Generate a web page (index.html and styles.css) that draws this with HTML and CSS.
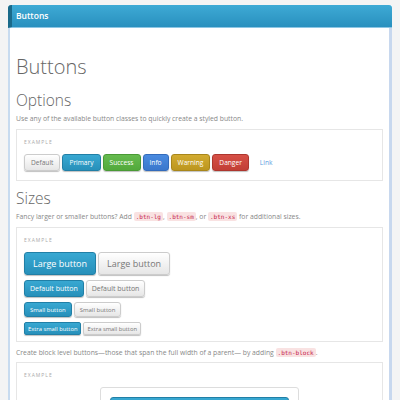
FILE: index.html
```html
<!DOCTYPE html>
<html>
<head>
<meta charset="utf-8">
<link rel="stylesheet" href="styles.css">
</head>
<body>
<div class="panel">
  <div class="panel-head">Buttons</div>
  <div class="panel-body">
    <h1 class="title">Buttons</h1>
    <h2 class="sub">Options</h2>
    <p class="txt">Use any of the available button classes to quickly create a styled button.</p>
    <div class="example">
      <div class="label">EXAMPLE</div>
      <div class="row">
        <span class="btn def">Default</span>
        <span class="btn pri">Primary</span>
        <span class="btn suc">Success</span>
        <span class="btn inf">Info</span>
        <span class="btn war">Warning</span>
        <span class="btn dan">Danger</span>
        <span class="btn lnk">Link</span>
      </div>
    </div>
    <h2 class="sub sizes">Sizes</h2>
    <p class="txt">Fancy larger or smaller buttons? Add <code>.btn-lg</code>, <code>.btn-sm</code>, or <code>.btn-xs</code> for additional sizes.</p>
    <div class="example sizes-ex">
      <div class="label">EXAMPLE</div>
      <div class="row"><span class="btn pri lg">Large button</span><span class="btn def lg">Large button</span></div>
      <div class="row"><span class="btn pri md">Default button</span><span class="btn def md">Default button</span></div>
      <div class="row"><span class="btn pri sm">Small button</span><span class="btn def sm">Small button</span></div>
      <div class="row"><span class="btn pri xs">Extra small button</span><span class="btn def xs">Extra small button</span></div>
    </div>
    <p class="txt block-txt">Create block level buttons—those that span the full width of a parent— by adding <code>.btn-block</code>.</p>
    <div class="example">
      <div class="label">EXAMPLE</div>
      <div class="well">
        <span class="btn pri block">Block level button</span>
      </div>
    </div>
  </div>
</div>
</body>
</html>
```

FILE: styles.css
```css
html, body {
  margin: 0;
  padding: 0;
  background: #f4f4f4;
  font-family: "Open Sans", "Noto Sans", sans-serif;
  color: #777;
  overflow: hidden;
}
.panel {
  margin: 5px 8px 0 8px;
  background: #fff;
}
.panel-head {
  height: 22px;
  line-height: 22px;
  background: linear-gradient(#3eaad5, #2990be);
  border-left: 4px solid #1a6a8a;
  border-bottom: 1px solid #8cc6e4;
  border-radius: 3px 3px 0 0;
  color: #fff;
  font-size: 8.5px;
  font-weight: 600;
  padding-left: 4px;
}
.panel-body {
  border-left: 2px solid #c8dbef;
  border-right: 3px solid #c8d8ee;
  padding: 27px 6px 20px 6px;
}
.title {
  margin: 0;
  font-size: 20px;
  font-weight: 300;
  line-height: 24px;
  color: #666;
}
.sub {
  margin: 12px 0 0 0;
  font-size: 15.5px;
  font-weight: 300;
  line-height: 18px;
  color: #666;
}
.sub.sizes { margin-top: 8px; }
.txt {
  margin: 4px 0 4px 0;
  font-size: 6.8px;
  line-height: 12px;
  color: #888;
}
.block-txt { margin: 5px 0 3px 0; }
code {
  font-family: "DejaVu Sans Mono", monospace;
  font-size: 6px;
  color: #c7254e;
  background: #f9e2e2;
  padding: 1px 2px;
  border-radius: 2px;
}
.example {
  border: 1px solid #e6e6e6;
  padding: 8px 7px 9px 7px;
}
.sizes-ex { padding-bottom: 6px; }
.label {
  font-size: 5px;
  letter-spacing: 1px;
  color: #aaa;
  line-height: 8px;
  margin-bottom: 8px;
}
.row {
  display: flex;
  align-items: center;
  gap: 2px;
  margin-bottom: 5px;
}
.row:last-child { margin-bottom: 0; }
.btn {
  display: inline-flex;
  align-items: center;
  justify-content: center;
  height: 17px;
  box-sizing: border-box;
  padding: 0 6px;
  font-size: 6.6px;
  border-radius: 3px;
  color: #fff;
  border: 1px solid transparent;
  box-shadow: 0 1px 1px rgba(0,0,0,0.25);
  white-space: nowrap;
}
.def {
  color: #777;
  background: linear-gradient(#fff, #e6e6e6);
  border-color: #ccc;
}
.pri { background: linear-gradient(#38a8d2, #2790ba); border-color: #217fa6; }
.suc { background: linear-gradient(#66bb4f, #52a93b); border-color: #4a9a35; }
.inf { background: linear-gradient(#4a8be0, #3a77cc); border-color: #336bbb; }
.war { background: linear-gradient(#d2ab30, #bc961f); border-color: #a8861a; }
.dan { background: linear-gradient(#d65046, #c23e35); border-color: #ad362e; }
.lnk { background: none; border: none; box-shadow: none; color: #5a9be0; margin-left: 3px; }
.lg { height: 23px; font-size: 9px; padding: 0 8px; }
.md { height: 17px; font-size: 7px; padding: 0 5px; }
.sm { height: 15px; font-size: 6px; padding: 0 5px; }
.xs { height: 13px; font-size: 5.8px; padding: 0 3px; border-radius: 2px; }
.well {
  margin: 1px 0 0 76px;
  width: 199px;
  box-sizing: border-box;
  border: 1px solid #ddd;
  border-radius: 3px;
  padding: 9px 9px;
}
.block {
  display: flex;
  width: 100%;
  height: 20px;
  font-size: 8px;
}
```
